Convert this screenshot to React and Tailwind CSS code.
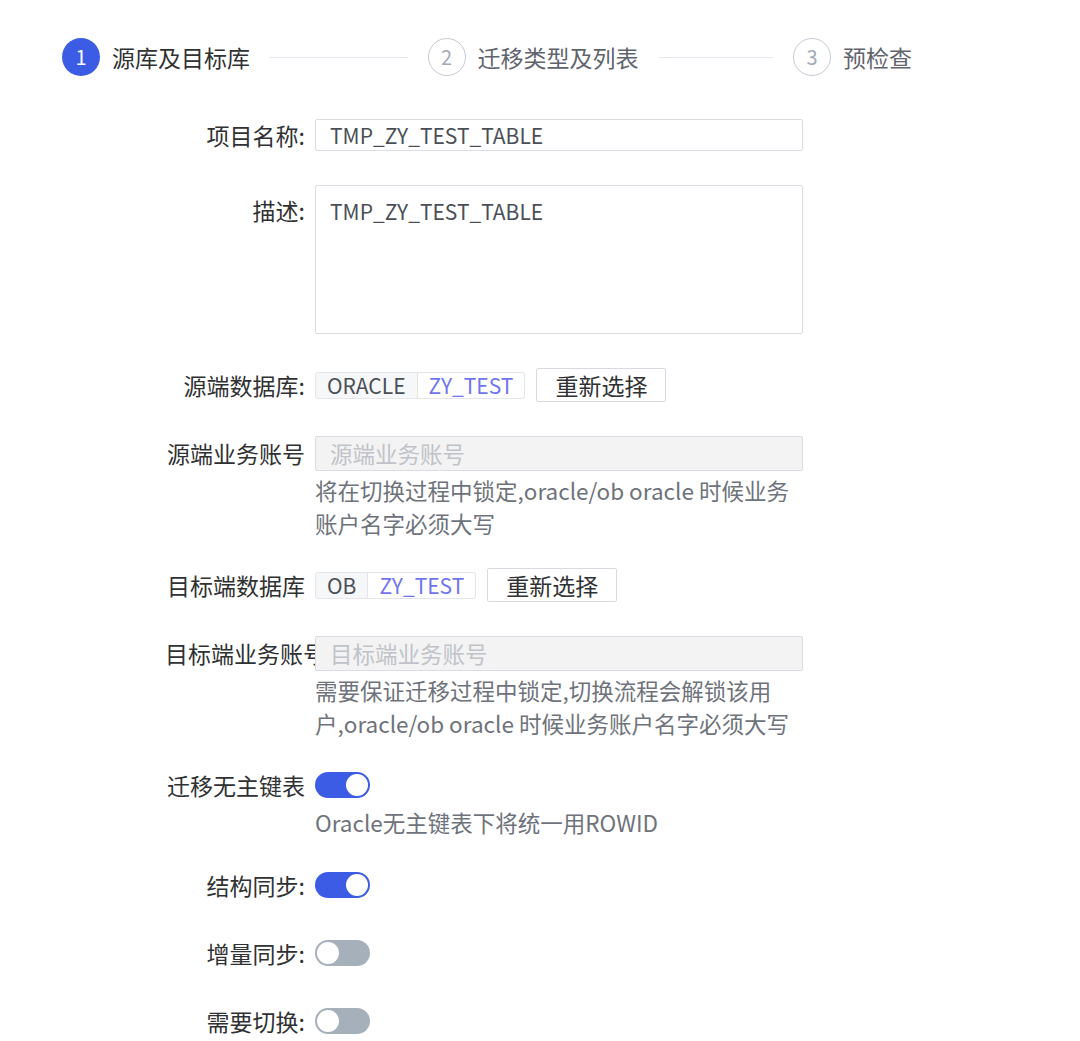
import React from "react";

const FONT = { fontFamily: '"Noto Sans CJK SC", "Noto Sans", sans-serif' };

function Step({ n, title, active, last }) {
  return (
    <div className={last ? "flex items-center flex-none" : "flex items-center flex-1"}>
      {active ? (
        <div className="w-[38px] h-[38px] rounded-full bg-[#3c5ce6] text-white flex items-center justify-center text-[20px] flex-none">
          {n}
        </div>
      ) : (
        <div className="w-[38px] h-[38px] rounded-full border-[1.5px] border-[#c5cad3] text-[#a4abb8] flex items-center justify-center text-[20px] flex-none">
          {n}
        </div>
      )}
      <div className={active ? "ml-[12px] text-[23px] text-[#303133] whitespace-nowrap" : "ml-[12px] text-[23px] text-[#5f646d] whitespace-nowrap"}>
        {title}
      </div>
      {!last && <div className="flex-1 h-px bg-[#e4e7ed] mx-[20px]" />}
    </div>
  );
}

function Label({ children, className = "" }) {
  return (
    <div className={"w-[150px] flex-none pr-[10px] text-right whitespace-nowrap text-[23px] text-[#303133] " + className}>
      {children}
    </div>
  );
}

function Toggle({ on }) {
  return on ? (
    <div className="w-[55px] h-[26px] rounded-full bg-[#3c5ce6] relative flex-none">
      <div className="absolute right-[2px] top-[2px] w-[22px] h-[22px] rounded-full bg-white" />
    </div>
  ) : (
    <div className="w-[55px] h-[26px] rounded-full bg-[#a6b0bb] relative flex-none">
      <div className="absolute left-[2px] top-[2px] w-[22px] h-[22px] rounded-full bg-white" />
    </div>
  );
}

function DbTag({ type, name }) {
  return (
    <div className="flex items-stretch h-[27px] text-[21px] leading-[27px]">
      <div className="bg-[#f6f7f8] text-[#4a4f57] px-[11px] border border-[#e3e5e8] rounded-l-[3px] flex items-center">{type}</div>
      <div className="bg-white text-[#7075ee] px-[11px] border border-l-0 border-[#e3e5e8] rounded-r-[3px] flex items-center">{name}</div>
    </div>
  );
}

function ResetButton() {
  return (
    <button className="h-[34px] px-[18px] border border-[#d7dae0] rounded-[2px] bg-white text-[23px] text-[#303133] leading-[32px] ml-[11px]">
      重新选择
    </button>
  );
}

function Helper({ children, className = "" }) {
  return (
    <div className={"text-[22.5px] leading-[33px] text-[#6e737b] whitespace-nowrap " + className}>{children}</div>
  );
}

export default function App() {
  return (
    <div className="min-h-[1041px] w-[1080px] bg-white" style={FONT}>
      <div className="pt-[38px] pl-[62px] w-[912px] flex items-center">
        <Step n="1" title="源库及目标库" active />
        <Step n="2" title="迁移类型及列表" />
        <Step n="3" title="预检查" last />
      </div>

      <div className="pl-[165px] pt-[43px]">
        {/* 项目名称 */}
        <div className="flex items-center mb-[34px]">
          <Label className="leading-[32px]">项目名称:</Label>
          <div className="w-[488px] h-[32px] border border-[#d9dce2] rounded-[2px] px-[14px] text-[21px] leading-[30px] text-[#4a4f57]">
            TMP_ZY_TEST_TABLE
          </div>
        </div>

        {/* 描述 */}
        <div className="flex items-start mb-[34px]">
          <Label className="leading-[32px] pt-[9px]">描述:</Label>
          <div className="w-[488px] h-[149px] border border-[#d9dce2] rounded-[2px] px-[14px] pt-[9px] text-[21px] leading-[32px] text-[#4a4f57]">
            TMP_ZY_TEST_TABLE
          </div>
        </div>

        {/* 源端数据库 */}
        <div className="flex items-center h-[34px] mb-[34px]">
          <Label>源端数据库:</Label>
          <DbTag type="ORACLE" name="ZY_TEST" />
          <ResetButton />
        </div>

        {/* 源端业务账号 */}
        <div className="flex items-start mb-[28px]">
          <Label className="leading-[35px]">源端业务账号</Label>
          <div className="w-[488px]">
            <div className="h-[35px] border border-[#d9dce2] rounded-[2px] bg-[#f3f3f3] px-[14px] text-[22.5px] leading-[33px] text-[#bfc3c9]">
              源端业务账号
            </div>
            <Helper className="mt-[3px]">
              将在切换过程中锁定,oracle/ob oracle 时候业务<br />账户名字必须大写
            </Helper>
          </div>
        </div>

        {/* 目标端数据库 */}
        <div className="flex items-center h-[34px] mb-[34px]">
          <Label>目标端数据库</Label>
          <DbTag type="OB" name="ZY_TEST" />
          <ResetButton />
        </div>

        {/* 目标端业务账号 */}
        <div className="flex items-start mb-[28px]">
          <Label className="leading-[35px]">目标端业务账号</Label>
          <div className="w-[488px]">
            <div className="h-[35px] border border-[#d9dce2] rounded-[2px] bg-[#f3f3f3] px-[14px] text-[22.5px] leading-[33px] text-[#bfc3c9]">
              目标端业务账号
            </div>
            <Helper className="mt-[3px]">
              需要保证迁移过程中锁定,切换流程会解锁该用<br />户,oracle/ob oracle 时候业务账户名字必须大写
            </Helper>
          </div>
        </div>

        {/* 迁移无主键表 */}
        <div className="flex items-start mb-[29px]">
          <Label className="leading-[34px]">迁移无主键表</Label>
          <div>
            <div className="h-[34px] flex items-center">
              <Toggle on />
            </div>
            <Helper className="mt-[4px]">Oracle无主键表下将统一用ROWID</Helper>
          </div>
        </div>

        <div className="flex items-center h-[34px] mb-[34px]">
          <Label>结构同步:</Label>
          <Toggle on />
        </div>
        <div className="flex items-center h-[34px] mb-[34px]">
          <Label>增量同步:</Label>
          <Toggle />
        </div>
        <div className="flex items-center h-[34px]">
          <Label>需要切换:</Label>
          <Toggle />
        </div>
      </div>
    </div>
  );
}
